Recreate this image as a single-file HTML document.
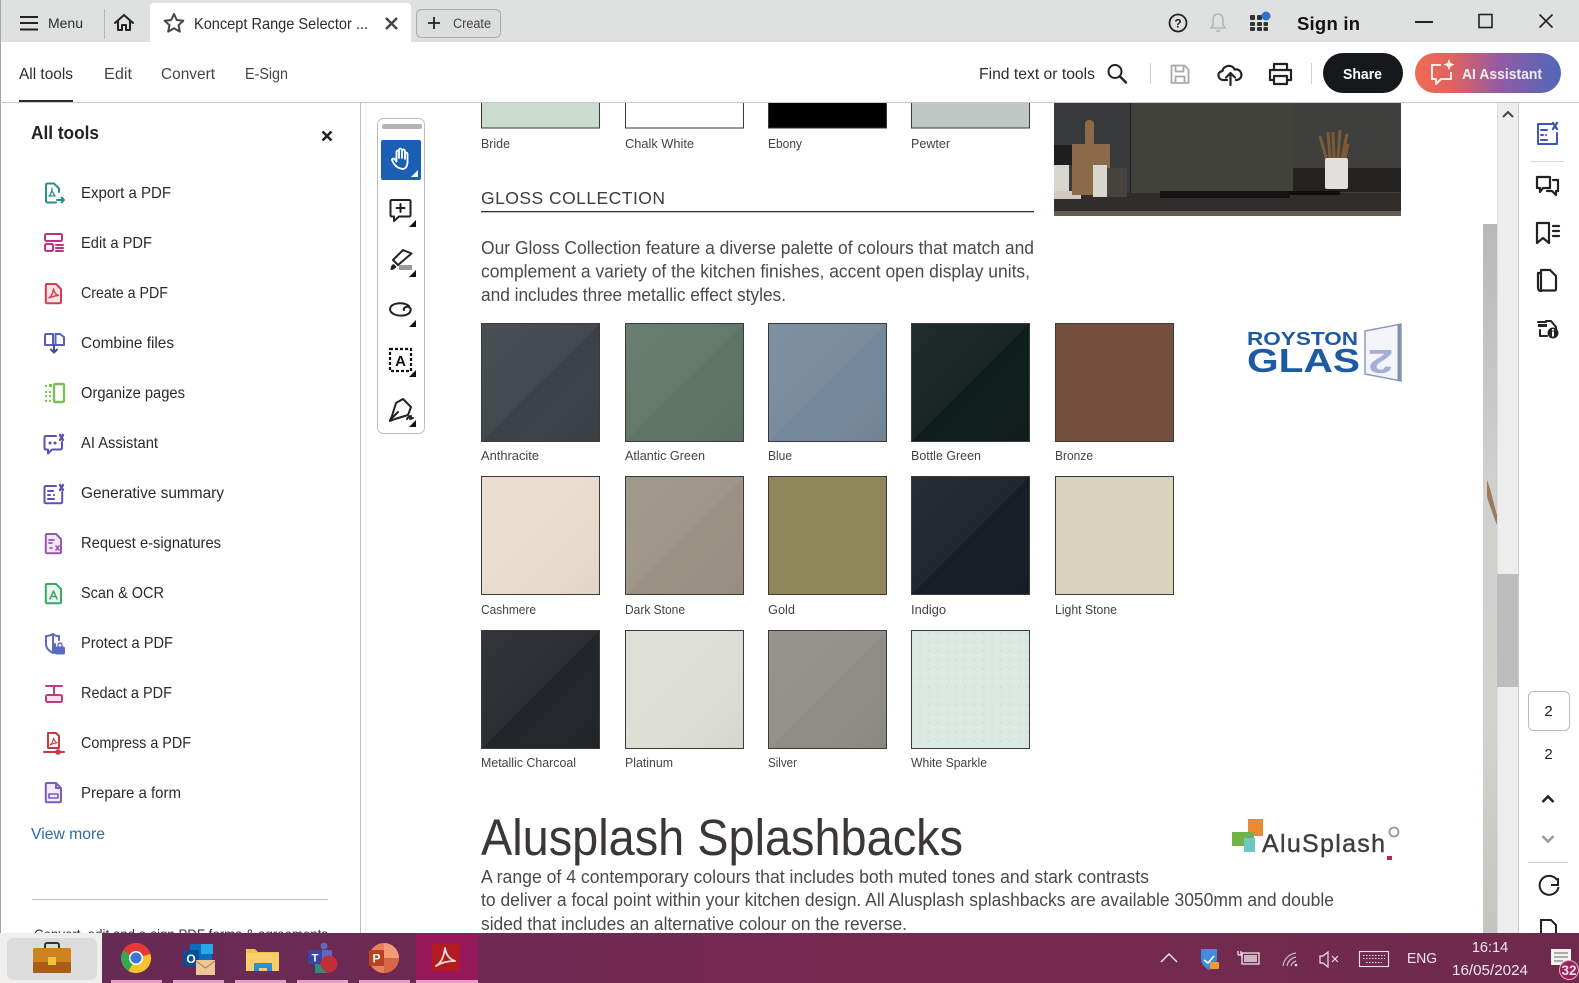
<!DOCTYPE html>
<html lang="en">
<head>
<meta charset="utf-8">
<title>Koncept Range Selector</title>
<style>
html,body{margin:0;padding:0;background:#fff;width:1579px;height:983px;overflow:hidden}
svg{display:block}
text{font-family:"Liberation Sans",Arial,sans-serif;fill:#2c2c2c;font-size:15px}
.it{font-size:16px;fill:#2a2a2a}
.lb{font-size:13px;fill:#444}
.pa{font-size:18px;fill:#4a4a4a}
.tk{fill:#f0e6ec}
.ic{fill:none;stroke-width:2;stroke-linejoin:round;stroke-linecap:round}
.k{fill:none;stroke:#222;stroke-width:2;stroke-linejoin:round;stroke-linecap:round}
</style>
</head>
<body>
<svg width="1579" height="983" viewBox="0 0 1579 983" xmlns="http://www.w3.org/2000/svg">
<defs>
<linearGradient id="ai" x1="0" x2="1" y1="0" y2="0"><stop offset="0" stop-color="#f06a55"/><stop offset=".25" stop-color="#e0635f"/><stop offset=".6" stop-color="#8f5ba6"/><stop offset="1" stop-color="#4f68b8"/></linearGradient>
<linearGradient id="tb" x1="0" x2="1" y1="0" y2="0"><stop offset="0" stop-color="#642a56"/><stop offset=".55" stop-color="#76294f"/><stop offset="1" stop-color="#6e2a4c"/></linearGradient>
<linearGradient id="gr" x1="0" x2="0" y1="0" y2="1"><stop offset="0" stop-color="#b8b8b6"/><stop offset=".35" stop-color="#cfcfcd"/><stop offset=".7" stop-color="#d2d2ce"/><stop offset="1" stop-color="#c5c5c0"/></linearGradient>
<linearGradient id="sh" x1="0" x2="1" y1="0" y2="1"><stop offset="0" stop-color="#fff" stop-opacity=".07"/><stop offset=".5" stop-color="#fff" stop-opacity=".04"/><stop offset=".5" stop-color="#fff" stop-opacity="0"/><stop offset="1" stop-color="#000" stop-opacity=".04"/></linearGradient>
<pattern id="sp" width="9" height="9" patternUnits="userSpaceOnUse"><circle cx="2" cy="3" r=".6" fill="#b6cac2"/><circle cx="7" cy="7" r=".5" fill="#f4fbf8"/></pattern>
</defs>

<rect width="1579" height="983" fill="#fff"/>

<!-- title bar -->
<rect width="1579" height="42" fill="#dfe1e0"/>
<rect x="150" y="3" width="261" height="42" rx="4" fill="#fff"/>
<rect x="0" y="0" width="1" height="983" fill="#a5a5a5"/>
<path d="M20 17h18M20 23h18M20 29.5h18" stroke="#222" stroke-width="2" fill="none"/>
<text x="48" y="28" style="font-size:13.5px" textLength="35" lengthAdjust="spacingAndGlyphs">Menu</text>
<rect x="104" y="9" width="1" height="30" fill="#b5b5b5"/>
<path d="M115 23l9-8 9 8M118 21v9h4v-5h4v5h4v-9" class="k"/>
<path d="M174 14l2.8 6 6.5.8-4.8 4.4 1.3 6.4-5.8-3.3-5.8 3.3 1.3-6.4-4.8-4.4 6.500-.8z" fill="none" stroke="#444" stroke-width="2" stroke-linejoin="round"/>
<text x="194" y="29" style="font-size:16px" textLength="174" lengthAdjust="spacingAndGlyphs">Koncept Range Selector ...</text>
<path d="M386 18l11 11M397 18l-11 11" stroke="#444" stroke-width="2.400" fill="none"/>
<rect x="416.500" y="9.500" width="84" height="28" rx="5" fill="#dcdedd" stroke="#aaa"/>
<path d="M434 17v12M428 23h12" stroke="#222" stroke-width="1.800" fill="none"/>
<text x="453" y="28" style="font-size:13.5px;fill:#444" textLength="38" lengthAdjust="spacingAndGlyphs">Create</text>

<circle cx="1178" cy="23" r="8.500" fill="none" stroke="#222" stroke-width="1.800"/>
<text x="1178" y="27.500" text-anchor="middle" style="font-size:12px;font-weight:bold;fill:#222">?</text>
<path d="M1218 14c-4 0-5 3-5 6v5l-2 3h14l-2-3v-5c0-3-1-6-5-6zM1216 31h4" fill="none" stroke="#b5b7b6" stroke-width="1.600"/>
<g fill="#333">
<rect x="1250" y="15" width="5" height="5" rx="1"/><rect x="1257" y="15" width="5" height="5" rx="1"/>
<rect x="1250" y="22" width="5" height="4" rx="1"/><rect x="1257" y="22" width="5" height="4" rx="1"/><rect x="1263.500" y="22" width="4.500" height="4" rx="1"/>
<rect x="1250" y="27" width="5" height="4" rx="1"/><rect x="1257" y="27" width="5" height="4" rx="1"/><rect x="1263.500" y="27" width="4.500" height="4" rx="1"/>
</g>
<circle cx="1266" cy="16" r="4.500" fill="#2e74c8"/>
<text x="1297" y="30" style="font-size:18.500px;font-weight:bold;fill:#111" textLength="63" lengthAdjust="spacing">Sign in</text>
<rect x="1415" y="21" width="18" height="2" fill="#222"/>
<rect x="1479" y="14.500" width="13" height="13" fill="none" stroke="#222" stroke-width="1.600"/>
<path d="M1539.500 14.500l13 13M1552.500 14.500l-13 13" stroke="#222" stroke-width="1.600" fill="none"/>

<!-- toolbar -->
<rect x="0" y="102" width="1579" height="1" fill="#c9c9c9"/>
<text x="19" y="79" textLength="54" lengthAdjust="spacingAndGlyphs" style="font-size:16px">All tools</text>
<rect x="19" y="100" width="54" height="2" fill="#2c2c2c"/>
<text x="104" y="79" textLength="28" lengthAdjust="spacingAndGlyphs" style="font-size:16px;fill:#444">Edit</text>
<text x="161" y="79" textLength="54" lengthAdjust="spacingAndGlyphs" style="font-size:16px;fill:#444">Convert</text>
<text x="245" y="79" textLength="43" lengthAdjust="spacingAndGlyphs" style="font-size:16px;fill:#444">E-Sign</text>
<text x="979" y="79" textLength="116" lengthAdjust="spacingAndGlyphs" style="font-size:16px">Find text or tools</text>
<circle cx="1115" cy="71.500" r="6.500" fill="none" stroke="#222" stroke-width="2"/><path d="M1120 76.500l6 6" class="k" style="stroke-width:2.400"/>
<rect x="1150" y="63" width="1" height="21" fill="#d0d0d0"/>
<path d="M1171.500 65.500h13l4 4v13.500h-17zM1175.500 66v5.500h8V66M1175.500 82.500v-6h9v6" fill="none" stroke="#a9a9a9" stroke-width="1.800" stroke-linejoin="round"/>
<path d="M1227 80h-3.500c-6 0-7-8-1-9 1-6 10-7 12-1.500 5-1 8 3.500 6.500 7.500-1 2-2.500 3-5 3M1230.500 85v-12M1226 77.500l4.500-4.500 4.500 4.500" class="k" style="stroke-width:2.200"/>
<path d="M1274 70v-6h13v6M1274 80h-4v-10h21v10h-4M1274 76h13v8h-13z" class="k" style="stroke-width:2.200"/>
<rect x="1311" y="63" width="1" height="21" fill="#d0d0d0"/>
<rect x="1323" y="53" width="80" height="40" rx="20" fill="#15191c"/>
<text x="1343" y="79" textLength="39" lengthAdjust="spacingAndGlyphs" style="font-size:15px;font-weight:bold;fill:#fff">Share</text>
<rect x="1415" y="53" width="146" height="40" rx="20" fill="url(#ai)"/>
<path d="M1441 65h-9v14h4v5l5-5h10v-7M1437 72h.1" fill="none" stroke="#fdeee8" stroke-width="2" stroke-linejoin="round"/>
<path d="M1449 59l1.600 4 4 1.600-4 1.600-1.600 4-1.600-4-4-1.600 4-1.600z" fill="#fdeee8"/>
<text x="1462" y="79" textLength="80" lengthAdjust="spacingAndGlyphs" style="font-size:15px;font-weight:bold;fill:#eee">AI Assistant</text>

<!-- sidebar -->
<rect x="360" y="103" width="1" height="830" fill="#bdbdbd"/>
<rect x="365" y="103" width="1" height="830" fill="#f0f0f0"/>
<text x="31" y="139" textLength="68" lengthAdjust="spacingAndGlyphs" style="font-size:18px;font-weight:bold;fill:#222">All tools</text>
<path d="M322.500 131.500l9 9M331.500 131.500l-9 9" stroke="#222" stroke-width="2.600" fill="none"/>

<text class="it" x="81" y="198" textLength="90" lengthAdjust="spacingAndGlyphs">Export a PDF</text>
<text class="it" x="81" y="248" textLength="71" lengthAdjust="spacingAndGlyphs">Edit a PDF</text>
<text class="it" x="81" y="298" textLength="87" lengthAdjust="spacingAndGlyphs">Create a PDF</text>
<text class="it" x="81" y="348" textLength="93" lengthAdjust="spacingAndGlyphs">Combine files</text>
<text class="it" x="81" y="398" textLength="104" lengthAdjust="spacingAndGlyphs">Organize pages</text>
<text class="it" x="81" y="448" textLength="77" lengthAdjust="spacingAndGlyphs">AI Assistant</text>
<text class="it" x="81" y="498" textLength="143" lengthAdjust="spacingAndGlyphs">Generative summary</text>
<text class="it" x="81" y="548" textLength="140" lengthAdjust="spacingAndGlyphs">Request e-signatures</text>
<text class="it" x="81" y="598" textLength="83" lengthAdjust="spacingAndGlyphs">Scan &amp; OCR</text>
<text class="it" x="81" y="648" textLength="92" lengthAdjust="spacingAndGlyphs">Protect a PDF</text>
<text class="it" x="81" y="698" textLength="91" lengthAdjust="spacingAndGlyphs">Redact a PDF</text>
<text class="it" x="81" y="748" textLength="110" lengthAdjust="spacingAndGlyphs">Compress a PDF</text>
<text class="it" x="81" y="798" textLength="100" lengthAdjust="spacingAndGlyphs">Prepare a form</text>
<text x="31" y="839" textLength="74" lengthAdjust="spacingAndGlyphs" style="font-size:16px;fill:#2f6aa8">View more</text>
<rect x="32" y="899" width="296" height="1" fill="#c4c4c4"/>
<text x="34" y="939" textLength="294" lengthAdjust="spacingAndGlyphs" style="font-size:14px;fill:#333">Convert, edit and e-sign PDF forms &amp; agreements</text>

<!-- sidebar icons -->
<g class="ic" stroke="#2a8f8c" transform="translate(43 182)"><path d="M3 9V3c0-1 .5-1.500 1.500-1.500H11l5 5V10M3 9v10c0 1 .5 1.500 1.500 1.500H13"/><path d="M6 14c2-1 3-6 3-8M9 9l3 5H6" stroke-width="1.300"/><path d="M14 18h7M18.500 15.500L21 18l-2.500 2.500" stroke-width="2"/></g>
<g class="ic" stroke="#c0307f" transform="translate(43 232)" stroke-width="2.300"><rect x="2" y="2" width="17" height="7" rx="1.500"/><rect x="2" y="12" width="8" height="7" rx="1.500"/><path d="M13 13h7M13 16h7M13 19h7"/></g>
<g class="ic" stroke="#d2404f" transform="translate(43 282)"><path d="M4 2h9l5 5v13c0 .8-.5 1.200-1.200 1.200H4c-.8 0-1.200-.4-1.200-1.200V3.200C2.800 2.400 3.200 2 4 2z" fill="#fbe4e6"/><path d="M6 16c3-2 4-6 4.500-9 .5 3 2.500 6 5 6.500-3 0-6 1-9.500 2.500z" stroke-width="1.400" fill="none"/></g>
<g class="ic" stroke="#5a5fb5" transform="translate(43 331)" stroke-width="2.100"><path d="M10 3H3.500C2.500 3 2 3.500 2 4.500V14h8zM12.500 3H17l4 3v8h-8.500z"/><path d="M11 14v7M8 18.500l3 3 3-3" stroke="#3f4a9a" stroke-width="2"/></g>
<g transform="translate(43 382)" fill="#7abf5a"><rect x="11" y="2" width="10" height="18" rx="1" fill="none" stroke="#7abf5a" stroke-width="2.400"/><rect x="2" y="3" width="2" height="2"/><rect x="6" y="2" width="3" height="3"/><rect x="2" y="9" width="2" height="2"/><rect x="6" y="9" width="2" height="2"/><rect x="2" y="13" width="2" height="2"/><rect x="6" y="13" width="2" height="2"/><rect x="2" y="18" width="2" height="2"/><rect x="6" y="18" width="2" height="2"/></g>
<g class="ic" stroke="#5a52b5" transform="translate(43 432)" stroke-width="2.200"><path d="M13 4H3c-1 0-1.500.5-1.500 1.500V16c0 1 .5 1.500 1.500 1.500h2v4l4-4h8c1 0 2-.5 2-1.500v-6"/><path d="M7 11h.1M12 11h.1" stroke-width="3"/><path d="M17 3l3 5M20 3l-3 5" stroke-width="2.400"/></g>
<g class="ic" stroke="#5a52b5" transform="translate(43 482)" stroke-width="2.200"><path d="M13 4H3c-1 0-1.500.5-1.500 1.500V20c0 .8.5 1.200 1.200 1.200h15c1 0 1.500-.5 1.500-1.500V10"/><path d="M5 9h5M5 13h2M11 13h.1M5 17h6"/><path d="M17 3l3 5M20 3l-3 5" stroke-width="2.400"/></g>
<g class="ic" stroke="#9a55b5" transform="translate(44 532)" stroke-width="2.200"><path d="M3 2h9l5 5v13c0 .7-.4 1.200-1.200 1.200H3c-.7 0-1.200-.5-1.200-1.200V3.200C1.800 2.500 2.300 2 3 2z" fill="#f1e8f6"/><path d="M5 8h5M5 11h3M6 16h2M12 14l3 4M15 14l-3 4" stroke-width="1.700"/></g>
<g class="ic" stroke="#3aa868" transform="translate(44 582)" stroke-width="2.200"><path d="M3 2h9l5 5v13c0 .7-.4 1.200-1.200 1.200H3c-.7 0-1.200-.5-1.200-1.200V3.200C1.800 2.500 2.300 2 3 2z" fill="#eaf6ee"/><path d="M6 17l3.500-8 3.500 8M7 14.500h5" stroke-width="1.500"/></g>
<g class="ic" stroke="#5a6cc0" transform="translate(44 632)" stroke-width="2.200"><path d="M9 2c-3 2-5 2-7 2v8c0 4 3 7 7 9zM9 2c2.500 2 4 2 6 2v4"/><path d="M11 21V12"/><rect x="12" y="15.500" width="8" height="6" rx="1" fill="#5a6cc0"/><path d="M14 15v-2c0-2.500 4-2.500 4 0v2" stroke-width="1.400"/></g>
<g class="ic" stroke="#c23a80" transform="translate(44 682)" stroke-width="2.400"><path d="M2 4h16M10 4v8"/><rect x="2" y="13" width="16" height="7" rx="1.500" fill="#f6e3ee"/></g>
<g class="ic" stroke="#c83a40" transform="translate(43 731)"><path d="M5 2h8l3 3v12H5z" fill="#fff"/><path d="M7 14c2-1 3-4 3.500-7 .5 2 2 4 3.500 5-2 0-4 .5-7 2z" stroke-width="1.100"/><path d="M1 21h20" stroke-width="2"/><circle cx="15" cy="21" r="1.800" fill="#c83a40"/></g>
<g class="ic" stroke="#7a5cc0" transform="translate(44 781)" stroke-width="2.200"><path d="M3 2h9l5 5v13c0 .7-.4 1.200-1.200 1.200H3c-.7 0-1.200-.5-1.200-1.200V3.200C1.800 2.500 2.300 2 3 2z" fill="#f1edf9"/><path d="M12 2.500V7h4.500"/><rect x="5" y="13" width="9" height="4" stroke-width="1.600"/></g>

<!-- floating tool rail -->
<rect x="377.500" y="118.500" width="47" height="315" rx="6" fill="#fff" stroke="#bcbcbc"/>
<rect x="382" y="124" width="40" height="5" rx="2" fill="#b5b5b5"/>
<rect x="381" y="140" width="40" height="40" rx="2" fill="#1b5fb4"/>
<path d="M399 168c-3-1-6-5-7-8 0-1.500 2-2 3-.5l1.500 2V152c0-1.800 2.500-1.800 2.500 0v6-8c0-1.800 3-1.800 3 0v8-7c0-1.800 3-1.800 3 0v8-5c0-1.800 2.500-1.800 2.500 0v8c0 4-2 7-5 7z" fill="none" stroke="#fff" stroke-width="1.800" stroke-linejoin="round"/>
<path d="M418 170v7h-7z" fill="#fff"/>
<path d="M392 200h17c1 0 1.500.5 1.500 1.500V215c0 1-.5 1.500-1.500 1.500h-10l-5 4.500v-4.500h-2c-1 0-1.500-.5-1.500-1.500v-13.500c0-1 .5-1.500 1.500-1.500zM400.500 204v8M396.500 208h8" class="k"/>
<path d="M416 220v7h-7z" fill="#111"/>
<path d="M403 250l8.500 3.500L398 265l-5-5z" class="k"/>
<path d="M390.500 270c0-3 1-5 3-6l3 2.500c-1 2-3 3.500-6 3.500z" fill="#222"/><rect x="399" y="265" width="13" height="5" fill="#999"/>
<path d="M416 270v7h-7z" fill="#111"/>
<path d="M409 306c-5-4-18-4-19 3 0 5 8 8 16 6 5-2 6-6 3-8-3-1-6 1-5 3" class="k"/>
<path d="M416 320v7h-7z" fill="#111"/>
<rect x="390" y="349" width="21" height="22" fill="none" stroke="#111" stroke-width="2.200" stroke-dasharray="3 2"/>
<text x="400.500" y="366" text-anchor="middle" style="font-size:15px;font-weight:bold;fill:#111">A</text>
<path d="M416 370v7h-7z" fill="#111"/>
<path d="M403 399l8 8-3 8-13 4-5 2 2-5 4-13zM390 420l8-8M407 419c1-2 3-3 4-3l-1 3 3-1" class="k"/>
<path d="M416 420v7h-7z" fill="#111"/>

<!-- doc: top row -->
<g stroke="#3a3a3a" stroke-width="1">
<path d="M481.500 103v25h118v-25" fill="#c9dccf"/>
<path d="M625.500 103v25h118v-25" fill="#fff"/>
<path d="M768.500 103v25h118v-25" fill="#000"/>
<path d="M911.500 103v25h118v-25" fill="#bfc6c3"/>
</g>
<text class="lb" x="481" y="148" textLength="29" lengthAdjust="spacingAndGlyphs">Bride</text>
<text class="lb" x="625" y="148" textLength="69" lengthAdjust="spacingAndGlyphs">Chalk White</text>
<text class="lb" x="768" y="148" textLength="34" lengthAdjust="spacingAndGlyphs">Ebony</text>
<text class="lb" x="911" y="148" textLength="39" lengthAdjust="spacingAndGlyphs">Pewter</text>

<!-- kitchen -->
<rect x="1054" y="103" width="347" height="113" fill="#3f403d"/>
<rect x="1054" y="103" width="76" height="95" fill="#38393a"/>
<rect x="1130" y="103" width="1" height="90" fill="#1e1e1e"/>
<rect x="1131" y="103" width="162" height="88" fill="#42423c"/>
<rect x="1293" y="168" width="108" height="24" fill="#252322"/>
<rect x="1054" y="193" width="347" height="18" fill="#2f2c29"/>
<rect x="1054" y="211" width="347" height="5" fill="#665c4f"/>
<rect x="1160" y="191" width="130" height="7" fill="#141414"/>
<rect x="1290" y="191" width="50" height="4" fill="#0e0e0e"/>
<rect x="1054" y="145" width="19" height="20" fill="#1e1e1e"/>
<rect x="1054" y="165" width="15" height="28" fill="#d8d5cf"/>
<rect x="1054" y="191" width="27" height="8" fill="#cfc9bf"/>
<rect x="1072" y="144" width="38" height="51" fill="#8b6a48"/>
<rect x="1085" y="120" width="9" height="26" rx="4" fill="#8b6a48"/>
<rect x="1093" y="165" width="14" height="32" fill="#d9d6d0"/>
<rect x="1107" y="168" width="20" height="29" fill="#45423f"/>
<g stroke="#7a5a38" stroke-width="3" fill="none"><path d="M1326 158l-6-22M1330 158l-2-26M1334 158l-1-26M1338 158l2-28M1342 158l5-24M1345 158l3-14"/></g>
<rect x="1325" y="158" width="23" height="31" rx="2" fill="#e2e0dc"/>

<!-- gloss -->
<text x="481" y="204" textLength="184" lengthAdjust="spacing" style="font-size:17.500px;fill:#3d3d3d">GLOSS COLLECTION</text>
<rect x="481" y="211" width="553" height="1.300" fill="#333"/>
<text class="pa" x="481" y="254" textLength="553" lengthAdjust="spacingAndGlyphs">Our Gloss Collection feature a diverse palette of colours that match and</text>
<text class="pa" x="481" y="277.500" textLength="549" lengthAdjust="spacingAndGlyphs">complement a variety of the kitchen finishes, accent open display units,</text>
<text class="pa" x="481" y="301" textLength="305" lengthAdjust="spacingAndGlyphs">and includes three metallic effect styles.</text>

<!-- swatches -->
<g stroke="#3b3b3b" stroke-width="1">
<rect x="481.500" y="323.500" width="118" height="118" fill="#3c4148"/><rect x="625.500" y="323.500" width="118" height="118" fill="#5c7566"/><rect x="768.500" y="323.500" width="118" height="118" fill="#74889b"/><rect x="911.500" y="323.500" width="118" height="118" fill="#0f1d1a"/><rect x="1055.500" y="323.500" width="118" height="118" fill="#734f3e"/>
<rect x="481.500" y="476.500" width="118" height="118" fill="#e8dccd"/><rect x="625.500" y="476.500" width="118" height="118" fill="#9b9184"/><rect x="768.500" y="476.500" width="118" height="118" fill="#8f8659"/><rect x="911.500" y="476.500" width="118" height="118" fill="#181d27"/><rect x="1055.500" y="476.500" width="118" height="118" fill="#d8d3bd"/>
<rect x="481.500" y="630.500" width="118" height="118" fill="#22262a"/><rect x="625.500" y="630.500" width="118" height="118" fill="#dcded3"/><rect x="768.500" y="630.500" width="118" height="118" fill="#8f8d84"/><rect x="911.500" y="630.500" width="118" height="118" fill="#dbe7e1"/>
</g>
<rect x="912" y="631" width="117" height="117" fill="url(#sp)"/>
<g fill="url(#sh)">
<rect x="482" y="324" width="117" height="117"/><rect x="626" y="324" width="117" height="117"/><rect x="769" y="324" width="117" height="117"/><rect x="912" y="324" width="117" height="117"/>
<rect x="482" y="477" width="117" height="117"/><rect x="626" y="477" width="117" height="117"/><rect x="912" y="477" width="117" height="117"/>
<rect x="482" y="631" width="117" height="117"/><rect x="626" y="631" width="117" height="117"/><rect x="769" y="631" width="117" height="117"/>
</g>
<text class="lb" x="481" y="460" textLength="58" lengthAdjust="spacingAndGlyphs">Anthracite</text>
<text class="lb" x="625" y="460" textLength="80" lengthAdjust="spacingAndGlyphs">Atlantic Green</text>
<text class="lb" x="768" y="460" textLength="24" lengthAdjust="spacingAndGlyphs">Blue</text>
<text class="lb" x="911" y="460" textLength="70" lengthAdjust="spacingAndGlyphs">Bottle Green</text>
<text class="lb" x="1055" y="460" textLength="38" lengthAdjust="spacingAndGlyphs">Bronze</text>
<text class="lb" x="481" y="614" textLength="55" lengthAdjust="spacingAndGlyphs">Cashmere</text>
<text class="lb" x="625" y="614" textLength="60" lengthAdjust="spacingAndGlyphs">Dark Stone</text>
<text class="lb" x="768" y="614" textLength="27" lengthAdjust="spacingAndGlyphs">Gold</text>
<text class="lb" x="911" y="614" textLength="35" lengthAdjust="spacingAndGlyphs">Indigo</text>
<text class="lb" x="1055" y="614" textLength="62" lengthAdjust="spacingAndGlyphs">Light Stone</text>
<text class="lb" x="481" y="767" textLength="95" lengthAdjust="spacingAndGlyphs">Metallic Charcoal</text>
<text class="lb" x="625" y="767" textLength="48" lengthAdjust="spacingAndGlyphs">Platinum</text>
<text class="lb" x="768" y="767" textLength="29" lengthAdjust="spacingAndGlyphs">Silver</text>
<text class="lb" x="911" y="767" textLength="76" lengthAdjust="spacingAndGlyphs">White Sparkle</text>

<!-- royston logo -->
<text x="1247" y="345" textLength="111" lengthAdjust="spacingAndGlyphs" style="font-size:18px;font-weight:bold;fill:#1d5aa3">ROYSTON</text>
<text x="1247" y="372" textLength="113" lengthAdjust="spacingAndGlyphs" style="font-size:33px;font-weight:bold;fill:#1d5aa3">GLAS</text>
<path d="M1365 331l36-7v57l-36-7z" fill="#f3f5fa" stroke="#8f9bb5" stroke-width="1.500"/>
<path d="M1399 324v57" stroke="#7d8fb5" stroke-width="3"/>
<text x="1369" y="372" textLength="25" lengthAdjust="spacingAndGlyphs" style="font-size:33px;font-weight:bold;fill:#a5aedb" transform="rotate(180 1381 361)">2</text>

<!-- alusplash -->
<text x="481" y="855" textLength="482" lengthAdjust="spacingAndGlyphs" style="font-size:51px;fill:#3b3735">Alusplash Splashbacks</text>
<text class="pa" x="481" y="883" textLength="668" lengthAdjust="spacingAndGlyphs">A range of 4 contemporary colours that includes both muted tones and stark contrasts</text>
<text class="pa" x="481" y="906" textLength="853" lengthAdjust="spacingAndGlyphs">to deliver a focal point within your kitchen design. All Alusplash splashbacks are available 3050mm and double</text>
<text class="pa" x="481" y="930" textLength="426" lengthAdjust="spacingAndGlyphs">sided that includes an alternative colour on the reverse.</text>
<rect x="1248" y="819" width="15" height="17" fill="#ee8a2c"/>
<rect x="1232" y="832" width="22" height="14" fill="#6fb444"/>
<rect x="1244" y="838" width="11" height="14" fill="#6cc8c4"/>
<text x="1262" y="852" textLength="123" lengthAdjust="spacing" style="font-size:25px;fill:#3e3e3e;stroke:#3e3e3e;stroke-width:.4">AluSplash</text>
<circle cx="1394" cy="832" r="4.500" fill="none" stroke="#999" stroke-width="1.800"/>
<rect x="1387" y="856" width="5" height="4" fill="#c0264e"/>

<!-- right scroll + page strip -->
<rect x="1483" y="224" width="14" height="709" fill="url(#gr)"/>
<path d="M1487 480c4 10 7 25 10 35v10c-4-10-8-22-10-28z" fill="#9b7a60"/>
<rect x="1497" y="103" width="21" height="830" fill="#ededed"/>
<rect x="1497" y="103" width="1" height="830" fill="#dcdcdc"/>
<rect x="1497" y="574" width="21" height="113" fill="#bdbdbd"/>
<path d="M1503 117l5-5 5 5" fill="none" stroke="#444" stroke-width="2"/>
<rect x="1518" y="103" width="1" height="830" fill="#c9c9c9"/>

<!-- right panel -->
<g fill="none" stroke="#3f57b5" stroke-width="2" stroke-linejoin="round" stroke-linecap="round"><path d="M1552 124h-14v20h19v-11"/><path d="M1541 130h6M1541 135h2M1546 135h.1M1541 140h6"/><path d="M1553 123l4 6M1557 123l-4 6" stroke-width="2.300"/></g>
<rect x="1530" y="161" width="34" height="1" fill="#d7d7d7"/>
<path d="M1537 177h13v11h-7l-3 4v-4h-3zM1553 180h5v11h-2v4l-4-4h-5" class="k" style="stroke-width:2.200"/>
<path d="M1537 223h12v20l-6-5-6 5zM1553 226h6M1553 231h6M1553 236h6" class="k" style="stroke-width:2.200"/>
<path d="M1541 273v-3h9l6 6v13c0 1-.5 1.500-1.500 1.500H1541zM1541 273h-3v14c0 3 1 4 3 4" class="k" style="stroke-width:2.200"/>
<path d="M1538 322h8v-1h5l5 6v4" class="k"/><path d="M1538 324h9v3h-9z" fill="#222"/><path d="M1540 330v6h7" class="k"/>
<circle cx="1553" cy="333" r="5.500" fill="#222"/><rect x="1552" y="331.500" width="2" height="5" fill="#fff"/><rect x="1552" y="329" width="2" height="1.600" fill="#fff"/>

<rect x="1528.500" y="691.500" width="41" height="39" rx="5" fill="#fff" stroke="#bcbcbc"/>
<text x="1548.500" y="716" text-anchor="middle" style="font-size:15px;fill:#222">2</text>
<text x="1548.500" y="759" text-anchor="middle" style="font-size:15px;fill:#222">2</text>
<path d="M1542.500 802l5.500-5.500 5.500 5.500" fill="none" stroke="#222" stroke-width="2.600"/>
<path d="M1542.500 836l5.500 5.500 5.500-5.500" fill="none" stroke="#9a9a9a" stroke-width="2.600"/>
<rect x="1528" y="862" width="40" height="1" fill="#d0d0d0"/>
<path d="M1557 880a9.500 9.500 0 1 0 1.500 7M1558 878v7h-7" fill="none" stroke="#222" stroke-width="2"/>
<path d="M1541 937v-17h10l5 5v12" fill="none" stroke="#222" stroke-width="2"/>

<!-- taskbar -->
<rect x="0" y="933" width="1579" height="50" fill="url(#tb)"/>
<rect x="0" y="933" width="102" height="50" fill="#f0efee"/>
<rect x="7" y="938" width="90" height="42" rx="6" fill="#dcdcdc"/>
<rect x="45" y="943" width="14" height="8" rx="2" fill="none" stroke="#333" stroke-width="2"/>
<rect x="33" y="948" width="38" height="25" rx="2" fill="#d0821f"/>
<rect x="33" y="962" width="38" height="11" rx="1" fill="#a85e17"/>
<rect x="48" y="957" width="8" height="8" fill="#f3c23b"/>

<rect x="416" y="933" width="62" height="50" fill="#96185a"/>
<g fill="#e79fc8"><rect x="111" y="980" width="51" height="3"/><rect x="173" y="980" width="51" height="3"/><rect x="235" y="980" width="51" height="3"/><rect x="297" y="980" width="51" height="3"/><rect x="359" y="980" width="51" height="3"/><rect x="416" y="980" width="62" height="3"/></g>

<circle cx="136" cy="958" r="15" fill="#e53a35"/>
<path d="M136 958L123 950.500A15 15 0 0 0 128.500 971z" fill="#34a853"/>
<path d="M136 958L128.500 971A15 15 0 0 0 150.500 954z" fill="#f7c22d"/>
<path d="M136 943a15 15 0 0 1 14.500 11H136z" fill="#e53a35"/>
<circle cx="136" cy="958" r="7" fill="#fff"/><circle cx="136" cy="958" r="5.500" fill="#3a78d8"/>

<rect x="190" y="944" width="22" height="20" fill="#0f6cbd"/><rect x="201" y="944" width="12" height="10" fill="#28a8ea"/>
<rect x="183" y="950" width="16" height="16" rx="1" fill="#0a4f94"/>
<text x="191" y="963" text-anchor="middle" style="font-size:12px;font-weight:bold;fill:#fff">O</text>
<rect x="196" y="960" width="19" height="15" fill="#ecc79a"/><path d="M196 961l9.500 7 9.500-7" stroke="#a87c50" fill="none"/>

<path d="M246 949h9l3 3h21v19h-33z" fill="#f2c14e"/><rect x="246" y="953" width="33" height="18" fill="#f5d06a"/>
<path d="M254 971v-7c0-1 .5-1 1-1h16c.5 0 1 0 1 1v7h-5v-3h-8v3z" fill="#2b8fd8"/>

<rect x="315" y="950" width="17" height="16" fill="#5a6ac0"/><circle cx="324" cy="946" r="3.500" fill="#5a6ac0"/>
<rect x="308" y="950" width="14" height="14" rx="1" fill="#3b46a3"/><text x="315" y="961.500" text-anchor="middle" style="font-size:11px;font-weight:bold;fill:#fff">T</text>
<rect x="315" y="964" width="12" height="9" fill="#2a8f80"/>
<circle cx="329" cy="964" r="8.500" fill="#c02f3a"/>

<circle cx="384" cy="958" r="15" fill="#e8805e"/><path d="M384 958V943a15 15 0 0 1 15 15z" fill="#f09a76"/><path d="M384 958h15a15 15 0 0 1-15 15z" fill="#d6654a"/>
<rect x="369" y="950" width="15" height="16" rx="1" fill="#b8421f"/><text x="376.500" y="962.500" text-anchor="middle" style="font-size:12px;font-weight:bold;fill:#fff">P</text>

<rect x="432" y="944" width="28" height="27" rx="2" fill="#b01c22"/>
<path d="M436 966c5-3 8-10 9-18 1 7 4 11 10 13-6 0-13 1-19 5z" fill="none" stroke="#f5d8d8" stroke-width="1.800" stroke-linejoin="round"/>

<!-- tray -->
<path d="M1161 962l8-8 8 8" fill="none" stroke="#efe3ea" stroke-width="1.500"/>
<path d="M1201 949h16v10c0 6-5 9-8 11-3-2-8-5-8-11z" fill="#3c8fd8"/><path d="M1204 960l4 3 6-7" stroke="#fff" stroke-width="1.600" fill="none"/><rect x="1210" y="962" width="9" height="7" rx="1" fill="#f39b2f"/>
<rect x="1242" y="953" width="17" height="11" fill="none" stroke="#efe3ea" stroke-width="1.300"/><path d="M1238 951v4M1241 951v4M1238 955h4v3" stroke="#efe3ea" stroke-width="1.300" fill="none"/><rect x="1244" y="955" width="13" height="7" fill="#efe3ea" opacity=".75"/>
<path d="M1283 966c1-7 6-12 13-13M1287 966c1-5 4-8 9-9M1291 966c.5-2 2-4 5-5" fill="none" stroke="#c8bcc4" stroke-width="1.200"/><circle cx="1296" cy="965" r="1.300" fill="#efe3ea"/>
<path d="M1320 956h3l5-4v15l-5-4h-3zM1332 956l6 6M1338 956l-6 6" fill="none" stroke="#efe3ea" stroke-width="1.200"/>
<rect x="1359.500" y="951.500" width="29" height="15" fill="none" stroke="#efe3ea" stroke-width="1.100"/><path d="M1363 955.500h22M1363 958.500h22M1366 962.500h16" stroke="#efe3ea" stroke-dasharray="1.500 1.500" fill="none"/>
<text class="tk" x="1407" y="963" textLength="30" lengthAdjust="spacingAndGlyphs" style="font-size:14.500px">ENG</text>
<text class="tk" x="1490" y="952" text-anchor="middle" style="font-size:14.500px">16:14</text>
<text class="tk" x="1490" y="975" text-anchor="middle" textLength="76" lengthAdjust="spacingAndGlyphs" style="font-size:14.500px">16/05/2024</text>
<rect x="1551" y="949" width="20" height="16" fill="#f3f3f3"/><path d="M1554 953h14M1554 957h14M1554 961h9" stroke="#666" stroke-width="1"/>
<circle cx="1569" cy="970" r="9.500" fill="#9a2258" stroke="#e7a9c4" stroke-width="1"/>
<text x="1569" y="975" text-anchor="middle" style="font-size:13.500px;font-weight:bold;fill:#f5e6ee">32</text>
</svg>
</body>
</html>
